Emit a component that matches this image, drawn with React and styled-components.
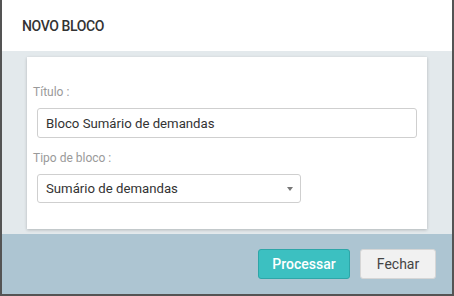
import React from "react";
import styled, { createGlobalStyle } from "styled-components";

const Global = createGlobalStyle`
  html, body { margin: 0; padding: 0; background: #555; }
  * { box-sizing: border-box; }
  body { font-family: Roboto, "Liberation Sans", Arial, sans-serif; }
`;

const Modal = styled.div`
  width: 454px;
  height: 296px;
  border: 2px solid #545454;
  border-top: none;
  display: flex;
  flex-direction: column;
  background: #fff;
`;

const Header = styled.div`
  height: 51px;
  flex: none;
  display: flex;
  align-items: center;
  padding-left: 20px;
  background: #fff;
`;

const Title = styled.h4`
  margin: 0;
  font-size: 14px;
  font-weight: 500;
  color: #333;
  letter-spacing: -0.4px;
`;

const Body = styled.div`
  flex: none;
  height: 183px;
  background: #e3e9ec;
  padding: 6px 25px 5px 25px;
`;

const Card = styled.div`
  background: #fff;
  height: 172px;
  padding: 27px 10px 0 6px;
  box-shadow: 0 1px 3px rgba(0, 0, 0, 0.22);
  display: flex;
  flex-direction: column;
`;

const Label = styled.label`
  display: block;
  font-size: 12px;
  line-height: 16px;
  color: #9a9a9a;
  margin-top: ${(p) => p.$gap || 0}px;
`;

const Field = styled.div`
  margin: 8px 0 0 4px;
  height: ${(p) => p.$h}px;
  width: ${(p) => p.$w};
  border: 1px solid #cfcfcf;
  border-radius: 3px;
  display: flex;
  align-items: center;
  justify-content: space-between;
  padding: 0 7px 0 8px;
  font-size: 13.2px;
  color: #333;
  background: #fff;
`;

const Arrow = styled.span`
  width: 0;
  height: 0;
  border-left: 3.5px solid transparent;
  border-right: 3.5px solid transparent;
  border-top: 4.5px solid #777;
  margin-top: 1px;
`;

const Footer = styled.div`
  flex: 1;
  background: #adc5d2;
  display: flex;
  justify-content: flex-end;
  align-items: flex-start;
  gap: 10px;
  padding: 15px 16px 0 0;
`;

const Button = styled.button`
  height: 30px;
  width: ${(p) => p.$w}px;
  border-radius: 3px;
  font-family: Roboto, "Liberation Sans", Arial, sans-serif;
  font-size: 14px;
  cursor: pointer;
  padding: 0;
  ${(p) =>
    p.$primary
      ? `background: #3cc0c1; border: 1px solid #2ea6a8; color: #fff; font-weight: 500;`
      : `background: #f1f1f1; border: 1px solid #d6d6d6; color: #444; font-weight: 400;`}
`;

export default function App() {
  return (
    <>
      <Global />
      <Modal>
        <Header>
          <Title>NOVO BLOCO</Title>
        </Header>
        <Body>
          <Card>
            <Label>Título :</Label>
            <Field $h={30} $w="380px">Bloco Sumário de demandas</Field>
            <Label $gap={12}>Tipo de bloco :</Label>
            <Field $h={29} $w="264px">
              <span>Sumário de demandas</span>
              <Arrow />
            </Field>
          </Card>
        </Body>
        <Footer>
          <Button $primary $w={92}>Processar</Button>
          <Button $w={76}>Fechar</Button>
        </Footer>
      </Modal>
    </>
  );
}
